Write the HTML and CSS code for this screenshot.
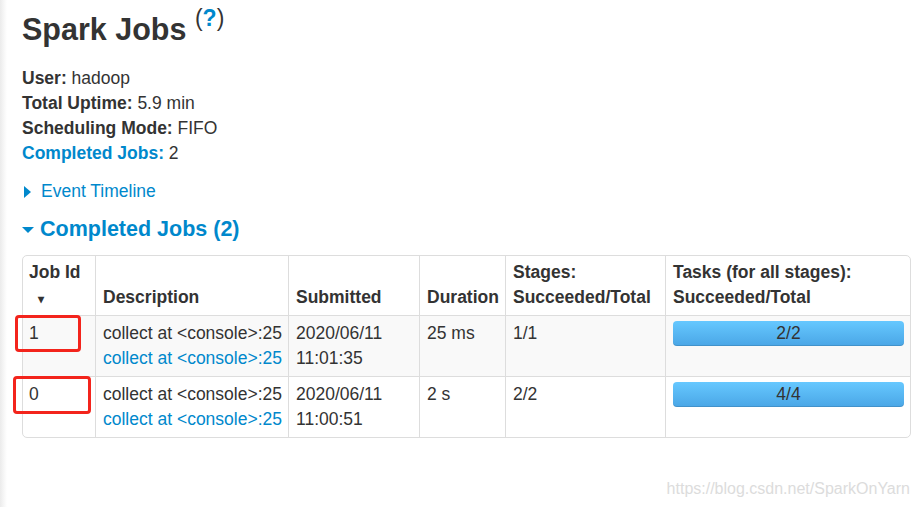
FILE: index.html
```html
<!DOCTYPE html>
<html lang="en">
<head>
    <meta charset="UTF-8">
    <meta name="viewport" content="width=device-width, initial-scale=1.0">
    <title>Spark Jobs</title>
    <link rel="stylesheet" href="styles.css">
</head>
<body>
    <div class="page">
        <h3 class="page-title">Spark Jobs <sup class="help">(<a href="#">?</a>)</sup></h3>

        <ul class="summary">
            <li><strong>User:</strong> hadoop</li>
            <li><strong>Total Uptime:</strong> 5.9 min</li>
            <li><strong>Scheduling Mode:</strong> FIFO</li>
            <li><a href="#"><strong>Completed Jobs:</strong></a> 2</li>
        </ul>

        <div class="timeline-toggle">
            <span class="arrow-right"></span>
            <a href="#">Event Timeline</a>
        </div>

        <h4 class="section-title">
            <span class="arrow-down"></span>
            <a href="#">Completed Jobs (2)</a>
        </h4>

        <div class="table-wrap">
            <table class="jobs-table">
                <colgroup>
                    <col class="c-id">
                    <col class="c-desc">
                    <col class="c-sub">
                    <col class="c-dur">
                    <col class="c-stage">
                    <col class="c-task">
                </colgroup>
                <thead>
                    <tr>
                        <th>Job Id<br><span class="sort-arrow">&#x25BE;</span></th>
                        <th>Description</th>
                        <th>Submitted</th>
                        <th>Duration</th>
                        <th>Stages:<br>Succeeded/Total</th>
                        <th>Tasks (for all stages):<br>Succeeded/Total</th>
                    </tr>
                </thead>
                <tbody>
                    <tr class="odd">
                        <td>1</td>
                        <td>collect at &lt;console&gt;:25<br><a href="#">collect at &lt;console&gt;:25</a></td>
                        <td>2020/06/11<br>11:01:35</td>
                        <td>25 ms</td>
                        <td>1/1</td>
                        <td><div class="progress"><span>2/2</span></div></td>
                    </tr>
                    <tr>
                        <td>0</td>
                        <td>collect at &lt;console&gt;:25<br><a href="#">collect at &lt;console&gt;:25</a></td>
                        <td>2020/06/11<br>11:00:51</td>
                        <td>2 s</td>
                        <td>2/2</td>
                        <td><div class="progress"><span>4/4</span></div></td>
                    </tr>
                </tbody>
            </table>
            <div class="mark mark-1"></div>
            <div class="mark mark-2"></div>
        </div>
    </div>
    <div class="watermark">https://blog.csdn.net/SparkOnYarn</div>
</body>
</html>
```

FILE: styles.css
```css
html, body {
    height: 100%;
}

body {
    margin: 0;
    font-family: "Liberation Sans", Arial, sans-serif;
    font-size: 17.5px;
    line-height: 25px;
    color: #333;
    background: linear-gradient(to right, #ebebeb 0, #f7f7f7 4px, #fff 7px);
    overflow: hidden;
}

a {
    color: #0088cc;
    text-decoration: none;
}

.page {
    padding: 0 8px 0 22px;
}

.page-title {
    margin: 0;
    padding-top: 9px;
    font-size: 30.5px;
    line-height: 40px;
    font-weight: bold;
    color: #333;
}

.help {
    font-size: 23px;
    font-weight: normal;
    vertical-align: 14px;
    line-height: 0;
}

.help a {
    font-weight: bold;
}

.summary {
    list-style: none;
    margin: 17px 0 0 0;
    padding: 0;
}

.timeline-toggle {
    margin-top: 13px;
    display: flex;
    align-items: center;
}

.arrow-right {
    width: 0;
    height: 0;
    border-top: 6px solid transparent;
    border-bottom: 6px solid transparent;
    border-left: 7px solid #0088cc;
    margin: 0 10px 0 2px;
}

.section-title {
    margin: 10px 0 11px 0;
    font-size: 21.5px;
    line-height: 30px;
    display: flex;
    align-items: center;
}

.arrow-down {
    width: 0;
    height: 0;
    border-left: 6px solid transparent;
    border-right: 6px solid transparent;
    border-top: 6px solid #0088cc;
    margin: 2px 6px 0 0;
}

.table-wrap {
    position: relative;
    width: 887px;
}

.jobs-table {
    width: 887px;
    table-layout: fixed;
    border-collapse: separate;
    border-spacing: 0;
    border: 1px solid #ddd;
    border-radius: 5px;
}

.c-id { width: 72px; }
.c-desc { width: 193px; }
.c-sub { width: 131px; }
.c-dur { width: 86px; }
.c-stage { width: 160px; }
.c-task { width: 245px; }

.jobs-table th,
.jobs-table td {
    padding: 5px 6px 5px 7px;
    text-align: left;
    vertical-align: top;
    border-left: 1px solid #ddd;
    border-top: 1px solid #ddd;
    white-space: nowrap;
}

.jobs-table th {
    height: 50px;
    padding-top: 4px;
    vertical-align: bottom;
    border-top: none;
    font-weight: bold;
}

.jobs-table th:first-child,
.jobs-table td:first-child {
    border-left: none;
    padding-left: 6px;
}

.sort-arrow {
    font-size: 12px;
    line-height: 0;
    padding-left: 9px;
}

.jobs-table tr.odd td {
    background: #f9f9f9;
}

.progress {
    height: 25px;
    border-radius: 4px;
    background: linear-gradient(to bottom, #66c8ff, #4aa6e6);
    box-shadow: inset 0 -1px 0 rgba(0, 0, 0, 0.12);
    text-align: center;
    line-height: 25px;
    color: #333;
}

.mark {
    position: absolute;
    border: 3px solid #f3241c;
    border-radius: 4px;
    box-sizing: border-box;
}

.mark-1 {
    left: -7px;
    top: 60px;
    width: 66px;
    height: 37px;
}

.mark-2 {
    left: -9px;
    top: 121px;
    width: 78px;
    height: 38px;
}

.watermark {
    position: absolute;
    right: 8px;
    bottom: 6px;
    font-size: 16px;
    color: #dcdcdc;
    text-shadow: 0 0 1px #fff;
}
```
